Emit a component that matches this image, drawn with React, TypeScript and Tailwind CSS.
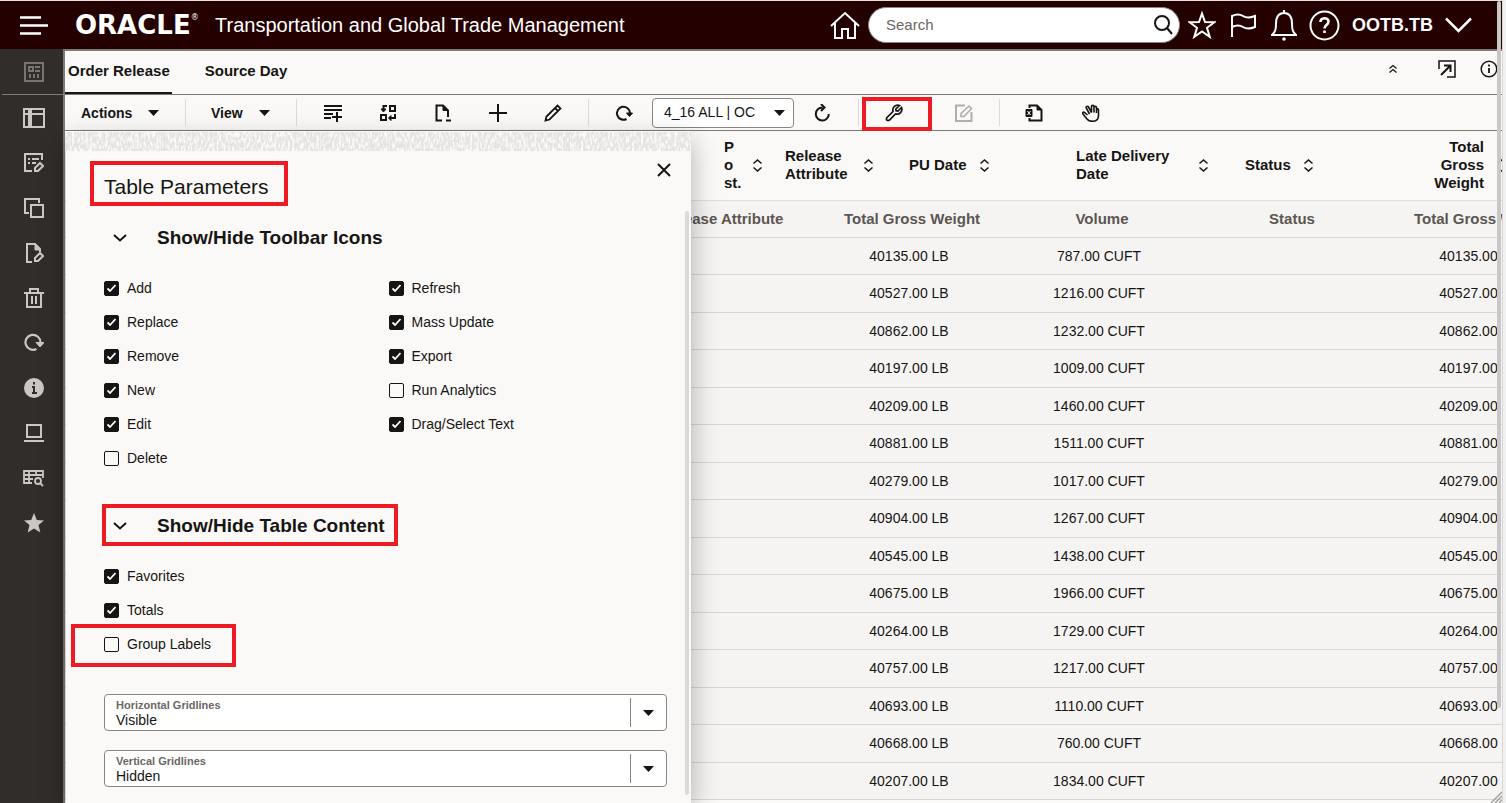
import { useState } from 'react'
import type { ReactNode } from 'react'

const weights = [
  ['40135.00 LB', '787.00 CUFT'],
  ['40527.00 LB', '1216.00 CUFT'],
  ['40862.00 LB', '1232.00 CUFT'],
  ['40197.00 LB', '1009.00 CUFT'],
  ['40209.00 LB', '1460.00 CUFT'],
  ['40881.00 LB', '1511.00 CUFT'],
  ['40279.00 LB', '1017.00 CUFT'],
  ['40904.00 LB', '1267.00 CUFT'],
  ['40545.00 LB', '1438.00 CUFT'],
  ['40675.00 LB', '1966.00 CUFT'],
  ['40264.00 LB', '1729.00 CUFT'],
  ['40757.00 LB', '1217.00 CUFT'],
  ['40693.00 LB', '1110.00 CUFT'],
  ['40668.00 LB', '760.00 CUFT'],
  ['40207.00 LB', '1834.00 CUFT'],
]

const toolbarLeft: [string, boolean][] = [
  ['Add', true],
  ['Replace', true],
  ['Remove', true],
  ['New', true],
  ['Edit', true],
  ['Delete', false],
]

const toolbarRight: [string, boolean][] = [
  ['Refresh', true],
  ['Mass Update', true],
  ['Export', true],
  ['Run Analytics', false],
  ['Drag/Select Text', true],
]

function Icon({ children, className = 'size-5', box = '0 0 20 20' }: { children: ReactNode; className?: string; box?: string }) {
  return (
    <svg className={className} viewBox={box} fill="none" stroke="currentColor" strokeWidth="2" aria-hidden="true">
      {children}
    </svg>
  )
}

function Triangle() {
  return (
    <svg className="h-[6px] w-[11px]" viewBox="0 0 11 6" fill="currentColor" aria-hidden="true">
      <path d="M0 0h11L5.500 6z" />
    </svg>
  )
}

function Separator() {
  return <span className="h-[27px] w-px shrink-0 bg-[#dcdad8]" />
}

// Red callout frame laid over the thing it points at
function Callout({ className }: { className: string }) {
  return <span className={`pointer-events-none absolute border-4 border-[#ed1c24] ${className}`} />
}

function SortIcon() {
  return (
    <svg className="h-[13px] w-[11px] shrink-0" viewBox="0 0 11 13" fill="none" stroke="currentColor" strokeWidth="1.500" aria-hidden="true">
      <path d="M1.500 4.500l4-3.500 4 3.500M1.500 8.500l4 3.500 4-3.500" />
    </svg>
  )
}

const sideIcons: { label: string; icon: ReactNode }[] = [
  {
    label: 'Layouts',
    icon: (
      <Icon className="h-5 w-[22px]" box="0 0 22 20">
        <path d="M1 1h5v18H1zM8 1h13v5H8zM8 6h13v13H8zM1 6h5" />
      </Icon>
    ),
  },
  {
    label: 'Edit list',
    icon: (
      <Icon>
        <path d="M8 18H1V1h17v6M4 6h2M8 6h7M4 10h2M8 10h4" />
        <path d="M11 18v-3l5-5 3 3-5 5z" />
      </Icon>
    ),
  },
  {
    label: 'Copy',
    icon: (
      <Icon>
        <path d="M5 15H1V1h14v4M7 7h12v12H7z" />
      </Icon>
    ),
  },
  {
    label: 'Edit document',
    icon: (
      <Icon>
        <path d="M8 19H3V1h8l5 5v3" />
        <path d="M11 1v6h5z" fill="currentColor" strokeWidth="1" />
        <path d="M11 18v-3l5-5 3 3-5 5z" />
      </Icon>
    ),
  },
  {
    label: 'Delete',
    icon: (
      <Icon>
        <path d="M0 5h20M6 5V1h8v4M3 5v14h14V5M8 8v8M12 8v8" />
      </Icon>
    ),
  },
  {
    label: 'Refresh',
    icon: (
      <Icon>
        <path d="M12.500 16A7.500 7.500 0 1 1 16.500 9.500" strokeWidth="2.200" />
        <path d="M12 9.500h8L16 14z" fill="currentColor" strokeWidth="1" />
      </Icon>
    ),
  },
  {
    label: 'Information',
    icon: (
      <Icon>
        <circle cx="10" cy="10" r="10" fill="currentColor" stroke="none" />
        <path d="M8 9h2v6M8 15h5M10 4v2.500" stroke="#312d2a" />
      </Icon>
    ),
  },
  {
    label: 'Screen',
    icon: (
      <Icon>
        <path d="M3 2h14v12H3zM0 18h20" />
      </Icon>
    ),
  },
  {
    label: 'Find in table',
    icon: (
      <Icon className="h-[18px] w-[22px]" box="0 0 22 18">
        <path d="M9 14H1V2h19v7M1 6h19M1 10h9M6 2v12M13 2v5" strokeWidth="1.800" />
        <circle cx="15" cy="12" r="3" strokeWidth="1.800" />
        <path d="M17 14l3 3" strokeWidth="1.800" />
      </Icon>
    ),
  },
  {
    label: 'Favorites',
    icon: (
      <Icon>
        <path d="M10 0l2.800 6.900 7.200.5-5.500 4.700 1.800 7.300L10 15.500l-6.300 3.900 1.800-7.300L0 7.400l7.200-.5z" fill="currentColor" stroke="none" />
      </Icon>
    ),
  },
]

function Sidebar() {
  return (
    <nav className="flex w-[65px] shrink-0 flex-col border-r-2 border-[#7f7975] bg-[#312d2a] text-[#cbc7c5]">
      <button aria-label="Workbench" className="ml-0.5 flex h-[46px] items-center justify-center border-b border-[#7f7975] pl-0.5 text-[#7a7470]">
        <Icon>
          <path d="M1 1h18v18H1zM5 5h4v4H5zM11 5h5M11 9h5M6 12v4M10 12v4M14 12v4" />
        </Icon>
      </button>
      {sideIcons.map((item) => (
        <button key={item.label} aria-label={item.label} className="flex h-[45px] items-center justify-center pl-1">
          {item.icon}
        </button>
      ))}
    </nav>
  )
}

function Header() {
  return (
    <header className="flex h-[49px] shrink-0 items-center border-t border-[#e4e2e1] bg-[#250000] pl-5 pr-[30px] text-white">
      <button aria-label="Navigation menu" className="w-[55px]">
        <Icon className="h-[19px] w-7" box="0 0 28 19">
          <path d="M0 1.500h21M0 9.500h28M0 17.500h21" strokeWidth="2.600" />
        </Icon>
      </button>
      <div className="w-[140px] font-['DejaVu_Sans',sans-serif] text-[26px] font-bold leading-6">
        ORACLE<sup className="align-super text-[8px] font-normal leading-none">®</sup>
      </div>
      <h1 className="whitespace-nowrap text-[20px]">Transportation and Global Trade Management</h1>
      <div className="ml-auto flex items-center">
        <a href="#home" aria-label="Home">
          <Icon className="h-[28px] w-[30px]" box="0 0 30 28">
            <path d="M1 15L15 2l14 13M5 12v15h7v-9h6v9h7V12" />
          </Icon>
        </a>
        <label className="ml-2 flex h-9 w-[312px] items-center rounded-full border border-[#8b8580] bg-white pl-[17px] pr-1 text-[#161513]">
          <input type="text" aria-label="Search" placeholder="Search" className="min-w-0 flex-1 bg-transparent text-[15px] outline-none placeholder:text-[#6b6763]" />
          <Icon className="size-[22px]" box="0 0 22 22">
            <circle cx="9" cy="9" r="7" />
            <path d="M14 14l5 6" />
          </Icon>
        </label>
        <button aria-label="Favorites" className="ml-2">
          <Icon className="size-7" box="0 0 28 28">
            <path d="M14 2.500l3 8.500 9.500.2-7.500 5.600 2.700 9L14 20.500l-7.700 5.300 2.700-9-7.500-5.600L11 11z" />
          </Icon>
        </button>
        <button aria-label="Flags" className="ml-[15px]">
          <Icon className="h-6 w-[25px]" box="0 0 25 24">
            <path d="M1 24V3c4-2 8-2 11 0s7 2 12 0v11c-5 2-9 2-12 0s-7-2-11 0" />
          </Icon>
        </button>
        <button aria-label="Notifications" className="ml-[15px]">
          <Icon className="h-[31px] w-[26px]" box="0 0 26 31">
            <path d="M13 0v3M1 25h24c-3-3-4-5-4-11 0-7-3-11-8-11s-8 4-8 11c0 6-1 8-4 11z" />
            <circle cx="13" cy="29" r="1.800" fill="currentColor" stroke="none" />
          </Icon>
        </button>
        <button aria-label="Help" className="ml-3">
          <Icon className="size-[31px]" box="0 0 31 31">
            <circle cx="15.500" cy="15.500" r="14" />
            <path d="M11.500 12c0-5 8-5 8-.5 0 3.500-4 3.500-4 7M15.500 20.500V23" strokeWidth="2.600" />
          </Icon>
        </button>
        <button className="ml-3 flex items-center gap-3 text-[18px] font-bold">
          OOTB.TB
          <Icon className="h-4 w-[27px]" box="0 0 27 16">
            <path d="M1 1.500L13.500 14 26 1.500" strokeWidth="2.500" />
          </Icon>
        </button>
      </div>
    </header>
  )
}

function Tabs() {
  return (
    <div className="flex h-11 shrink-0 items-center border-b border-[#7f7975] text-[15px] font-bold">
      <button className="h-[43px] border-b-2 border-[#161513] pl-[3px] pr-0.5">Order Release</button>
      <button className="ml-[33px] pb-0.5">Source Day</button>
      <div className="ml-auto flex items-center pb-2 pr-1">
        <button aria-label="Collapse">
          <Icon className="size-[10px]" box="0 0 10 10">
            <path d="M1.500 4.500L5 1.500l3.500 3M1.500 8.500L5 5.500l3.500 3" strokeWidth="1.300" />
          </Icon>
        </button>
        <button aria-label="Open in new window" className="ml-10">
          <Icon className="size-[18px]" box="0 0 18 18">
            <path d="M1 9V1h16v16H9" strokeWidth="1.500" />
            <path d="M3 15l9-9M6 5.500h6.500V12" />
          </Icon>
        </button>
        <button aria-label="Information" className="ml-6">
          <Icon className="size-[18px]" box="0 0 18 18">
            <circle cx="9" cy="9" r="7.800" strokeWidth="1.500" />
            <path d="M9 8v5M9 4.500v2" strokeWidth="1.800" />
          </Icon>
        </button>
      </div>
    </div>
  )
}

function ToolButton({ label, className, children }: { label: string; className: string; children: ReactNode }) {
  return (
    <button aria-label={label} className={`relative flex h-full shrink-0 items-center justify-center ${className}`}>
      <Icon className="size-[18px]" box="0 0 18 18">
        {children}
      </Icon>
    </button>
  )
}

function Toolbar() {
  return (
    <div className="flex h-9 shrink-0 items-center border-b border-[#7f7975] text-[14px]">
      <button className="flex w-[120px] items-center gap-4 pl-4 pt-px font-bold">
        Actions <Triangle />
      </button>
      <Separator />
      <button className="flex w-[110px] items-center gap-4 pl-[25px] pt-px font-bold">
        View <Triangle />
      </button>
      <Separator />
      <div className="mx-2 flex h-full">
        <ToolButton label="Add" className="w-[55px]">
          <path d="M0 2h18M0 6h18M0 10h9M0 14h7M13 8v10M8 13h10" />
        </ToolButton>
        <ToolButton label="Replace" className="w-[55px]">
          <path d="M11 2h5v5h-5zM2 11h5v5H2zM8 2H4.500v4M16 10v4h-4" />
          <path d="M2 5h5L4.500 8zM12 11.500v5L9.500 14z" fill="currentColor" strokeWidth="1" />
        </ToolButton>
        <ToolButton label="Remove" className="w-[55px]">
          <path d="M8 16.500H2.500v-15H9l5 5V13M12 16.500h5" />
          <path d="M9 1.500v5h5z" fill="currentColor" strokeWidth="1" />
        </ToolButton>
        <ToolButton label="New" className="w-[55px]">
          <path d="M9 0v18M0 9h18" />
        </ToolButton>
        <ToolButton label="Edit" className="w-[55px]">
          <path d="M1.500 16.500l1-4L13.500 1.500l3 3L5.500 15.500zM11 4l3 3" strokeWidth="1.800" />
        </ToolButton>
      </div>
      <Separator />
      <ToolButton label="Reload" className="ml-[19px] w-8">
        <path d="M11.500 15A6.500 6.500 0 1 1 15 9" />
        <path d="M11.500 9h6l-3 3.500z" fill="currentColor" strokeWidth="1" />
      </ToolButton>
      <div className="relative ml-3 flex h-[30px] w-[142px] items-center rounded border border-[#8b8580] bg-white">
        <select aria-label="Screen set" className="h-full w-[102px] appearance-none bg-transparent pl-[11px] outline-none">
          <option>4_16 ALL | OC</option>
        </select>
        <span className="ml-auto mr-2">
          <Triangle />
        </span>
      </div>
      <ToolButton label="Refresh" className="w-14">
        <path d="M9.500 3.500a6.500 6.500 0 1 0 6.300 6.500M8 0l3.500 3.500L8 7" />
      </ToolButton>
      <span className="w-2" />
      <Separator />
      <div className="relative h-full">
        <ToolButton label="Table parameters" className="w-[70px]">
          <path
            d="M14.500 1.500C10.500 0 7 3.500 8 7.500l-6 6c-1.500 2 .5 4 2.500 2.500l6-6c4 1 7.500-2.500 6-6.500L13 7l-2-.300L10.800 5z"
            strokeWidth="1.700"
          />
        </ToolButton>
        <Callout className="-bottom-px left-[3px] h-[34px] w-[70px]" />
      </div>
      <ToolButton label="Mass update" className="w-[70px] text-[#b0adab]">
        <path d="M10 1.500H1v15.500h15.500V8" />
        <path d="M6 12.500V9.500L14 2l2.500 2.500L9 12.500z" strokeWidth="1.600" />
      </ToolButton>
      <Separator />
      <ToolButton label="Export" className="w-[68px]">
        <path d="M4.500 4V1.500H12l4.500 4.500v10.500h-12V14" />
        <path d="M12 1.500V6h4.500z" fill="currentColor" strokeWidth="1" />
        <path d="M1 5.500h6v7H1z" fill="currentColor" strokeWidth="1" />
        <path d="M2.500 7l3 4M5.500 7l-3 4" stroke="#fff" strokeWidth="1" />
      </ToolButton>
      <ToolButton label="Drag" className="w-[46px]">
        <path
          d="M5.500 11L2.500 8.500C1 7.500 0 9 1 10l4 5c1.500 2 3 2.300 5.500 2.300 4 0 6-2.300 6-6V6c0-1.500-2-1.500-2 0v3V3.500c0-1.500-2.500-1.500-2.500 0V8.500M12 5V2.500c0-1.500-2.500-1.500-2.500 0V8.500L6.500 3C5.500 1.500 3.500 2.500 4.300 4L7.500 10"
          strokeWidth="1.600"
        />
      </ToolButton>
    </div>
  )
}

function HeaderCell({ children, className = '' }: { children: ReactNode; className?: string }) {
  return (
    <th className="px-0 pl-[11px] font-bold">
      <span className={`flex items-center gap-3 ${className}`}>
        {children}
        <SortIcon />
      </span>
    </th>
  )
}

function ResultsTable() {
  return (
    <div className="flex-1 overflow-hidden">
      <table className="w-[1520px] table-fixed border-collapse text-left text-[15px] leading-[18px]">
        <colgroup>
          <col className="w-[648px]" />
          <col className="w-[61px]" />
          <col className="w-[124px]" />
          <col className="w-[167px]" />
          <col className="w-[169px]" />
          <col className="w-[102px]" />
          <col />
        </colgroup>
        <thead>
          <tr className="h-[69px] border-b border-[#dfdddb]">
            <td />
            <HeaderCell className="-mr-2">
              <span className="w-4">
                P<br />o<br />st.
              </span>
            </HeaderCell>
            <HeaderCell>
              <span className="w-[66px]">Release Attribute</span>
            </HeaderCell>
            <HeaderCell>PU Date</HeaderCell>
            <HeaderCell>
              <span className="w-[110px]">Late Delivery Date</span>
            </HeaderCell>
            <HeaderCell>Status</HeaderCell>
            <HeaderCell className="pl-[73px]">
              <span className="w-[64px] text-right">Total Gross Weight</span>
            </HeaderCell>
          </tr>
        </thead>
      </table>
      <table className="w-[1511px] table-fixed border-collapse bg-[#f5f4f2] text-center text-[14px]">
        <colgroup>
          <col className="w-[561px]" />
          <col className="w-[190px]" />
          <col className="w-[190px]" />
          <col className="w-[190px]" />
          <col className="w-[190px]" />
          <col className="w-[190px]" />
        </colgroup>
        <thead>
          <tr className="h-[37px] border-b border-[#d9d7d5] text-[15px] text-[#5b5652]">
            <td />
            <th className="pl-0.5">Release Attribute</th>
            <th className="pl-0.5">Total Gross Weight</th>
            <th className="pl-0.5">Volume</th>
            <th className="pl-0.5">Status</th>
            <th className="pl-0.5">Total Gross Weight</th>
          </tr>
        </thead>
        <tbody>
          {weights.map(([weight, volume]) => (
            <tr key={weight} className="h-[37px] border-b border-[#d9d7d5] even:h-[38px]">
              <td />
              <td />
              <td className="pr-1">{weight}</td>
              <td className="pr-1">{volume}</td>
              <td />
              <td className="pr-1">{weight}</td>
            </tr>
          ))}
        </tbody>
      </table>
    </div>
  )
}

function Check({ label, checked }: { label: string; checked: boolean }) {
  return (
    <label className="flex h-[34px] items-center gap-2">
      <span className="grid size-[15px] place-items-center">
        <input
          type="checkbox"
          defaultChecked={checked}
          className="peer col-start-1 row-start-1 size-[15px] appearance-none rounded-[2px] border border-[#161513] checked:bg-[#161513]"
        />
        <svg className="pointer-events-none invisible col-start-1 row-start-1 h-2 w-[9px] peer-checked:visible" viewBox="0 0 9 8" fill="none" stroke="#fff" strokeWidth="1.800">
          <path d="M.5 4.500L3 7l5.500-6" />
        </svg>
      </span>
      {label}
    </label>
  )
}

function SectionTitle({ children, open, onToggle }: { children: ReactNode; open: boolean; onToggle: () => void }) {
  return (
    <button className="flex h-[54px] items-center gap-[30px] pl-[9px] text-[19px] font-bold" aria-expanded={open} onClick={onToggle}>
      <Icon className="h-2 w-[14px]" box="0 0 14 8">
        <path d="M1 1l6 5.500L13 1" />
      </Icon>
      {children}
    </button>
  )
}

function GridlineSelect({ id, label, value }: { id: string; label: string; value: string }) {
  return (
    <div className="flex h-[37px] w-[563px] rounded border border-[#8b8580] bg-white">
      <div className="flex flex-1 flex-col pt-1">
        <label htmlFor={id} className="pl-[11px] text-[11px] font-bold leading-3 text-[#6b6763]">
          {label}
        </label>
        <select id={id} defaultValue={value} className="h-[17px] w-full appearance-none bg-transparent pl-[11px] leading-4 outline-none">
          <option>Visible</option>
          <option>Hidden</option>
        </select>
      </div>
      <span className="my-[3px] flex w-9 items-center justify-center border-l border-[#8b8580]">
        <Triangle />
      </span>
    </div>
  )
}

function ParametersPanel() {
  const [iconsOpen, setIconsOpen] = useState(true)
  const [contentOpen, setContentOpen] = useState(true)

  return (
    <aside className="absolute bottom-0 left-px top-0 flex w-[625px] flex-col bg-[#fbf9f8] text-[14px] shadow-[0_10px_26px_rgba(0,0,0,0.3)]">
      <svg className="mt-px h-[19px] w-full shrink-0 bg-[#e6e4e2]" aria-hidden="true">
        <filter id="weave" x="0" y="0" width="100%" height="100%">
          <feTurbulence type="fractalNoise" baseFrequency="0.45 0.18" numOctaves="2" seed="4" />
          <feColorMatrix values="0 0 0 0 .97  0 0 0 0 .96  0 0 0 0 .95  4 0 0 0 -1.700" />
        </filter>
        <rect width="100%" height="100%" filter="url(#weave)" />
      </svg>
      <div className="flex h-[60px] shrink-0 items-start justify-between pl-[38px] pr-5">
        <div className="relative pt-5">
          <h2 className="text-[21px] leading-8">Table Parameters</h2>
          <Callout className="-left-[14px] top-[10px] h-[45px] w-[198px]" />
        </div>
        <button aria-label="Close" className="pt-3">
          <Icon className="size-[14px]" box="0 0 14 14">
            <path d="M1 1l12 12M13 1L1 13" />
          </Icon>
        </button>
      </div>
      <div className="flex min-h-0 flex-1 justify-between pb-2 pr-0.5">
        <div className="pl-[38px]">
          <SectionTitle open={iconsOpen} onToggle={() => setIconsOpen(!iconsOpen)}>
            Show/Hide Toolbar Icons
          </SectionTitle>
          {iconsOpen && (
            <div className="mt-1.5 grid grid-cols-2">
              <div>
                {toolbarLeft.map(([label, checked]) => (
                  <Check key={label} label={label} checked={checked} />
                ))}
              </div>
              <div className="pl-[3px]">
                {toolbarRight.map(([label, checked]) => (
                  <Check key={label} label={label} checked={checked} />
                ))}
              </div>
            </div>
          )}
          <div className="relative mt-6 w-fit">
            <SectionTitle open={contentOpen} onToggle={() => setContentOpen(!contentOpen)}>
              Show/Hide Table Content
            </SectionTitle>
            <Callout className="-left-0.5 top-[5px] h-[42px] w-[296px]" />
          </div>
          {contentOpen && (
            <div className="mt-1.5">
              <Check label="Favorites" checked />
              <Check label="Totals" checked />
              <div className="relative w-fit">
                <Check label="Group Labels" checked={false} />
                <Callout className="-left-[33px] -top-[3px] h-[43px] w-[165px]" />
              </div>
            </div>
          )}
          <div className="mt-[33px] flex flex-col gap-[19px]">
            <GridlineSelect id="horizontal" label="Horizontal Gridlines" value="Visible" />
            <GridlineSelect id="vertical" label="Vertical Gridlines" value="Hidden" />
          </div>
        </div>
        <span className="w-1 rounded-full bg-[#dcdad9]" />
      </div>
    </aside>
  )
}

export default function App() {
  return (
    <div className="h-screen overflow-hidden bg-[#f1f1f1] pr-[3px] font-['Liberation_Sans',Arial,sans-serif] text-[#161513]">
      <div className="relative flex h-full flex-col overflow-hidden border-r border-[#d9d7d5] bg-[#fbf9f8]">
        <Header />
        <div className="flex min-h-0 flex-1">
          <Sidebar />
          <main className="flex min-w-0 flex-1 flex-col border-t-2 border-[#7f7975]">
            <Tabs />
            <Toolbar />
            <div className="relative flex min-h-0 flex-1">
              <ResultsTable />
              <ParametersPanel />
            </div>
          </main>
        </div>
        <span className="absolute right-px top-px h-[88%] w-1 rounded-full bg-[#cac8c7]" />
        <svg className="absolute bottom-0 right-0 size-3" viewBox="0 0 12 12" stroke="#a5a3a1" strokeWidth="1.500" aria-hidden="true">
          <path d="M1 12L12 1M5 12l7-7M9 12l3-3" />
        </svg>
      </div>
    </div>
  )
}
